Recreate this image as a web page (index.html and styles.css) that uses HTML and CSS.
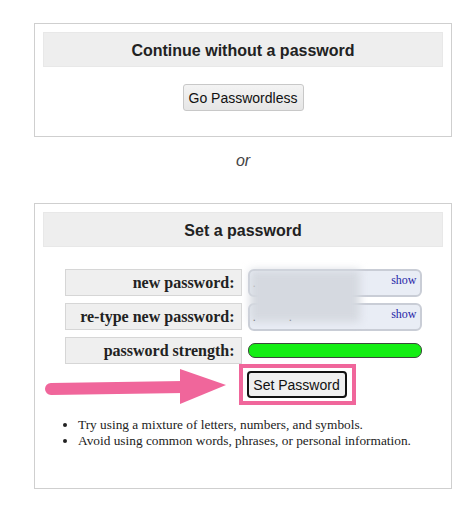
FILE: index.html
```html
<!DOCTYPE html>
<html lang="en">
<head>
    <meta charset="UTF-8">
    <meta name="viewport" content="width=device-width, initial-scale=1.0">
    <title>Account Password</title>
    <link rel="stylesheet" href="styles.css">
</head>
<body>
    <div class="panel">
        <h2 class="panel-title">Continue without a password</h2>
        <div class="passwordless">
            <button class="btn">Go Passwordless</button>
        </div>
    </div>

    <p class="or">or</p>

    <div class="panel panel-set">
        <h2 class="panel-title">Set a password</h2>

        <div class="pw-grid">
            <div class="pw-label">new password:</div>
            <div class="pw-field"><span class="dots">.</span><a class="show" href="#">show</a></div>

            <div class="pw-label">re-type new password:</div>
            <div class="pw-field"><span class="dots">.&nbsp;&nbsp;&nbsp;&nbsp;&nbsp;&nbsp;&nbsp;&nbsp;&nbsp;.</span><a class="show" href="#">show</a></div>

            <div class="pw-label">password strength:</div>
            <div class="strength-cell"><div class="strength"></div></div>

            <div></div>
            <div class="submit-cell">
                <button class="btn btn-focus">Set Password</button>
                <span class="highlight"></span>
            </div>
        </div>

        <ul class="tips">
            <li>Try using a mixture of letters, numbers, and symbols.</li>
            <li>Avoid using common words, phrases, or personal information.</li>
        </ul>

        <!-- redacted password area + annotation arrow -->
        <div class="redact"></div>
        <svg class="arrow" width="190" height="42" viewBox="0 0 190 42">
            <line x1="7" y1="23" x2="140" y2="21" stroke="#f0669b" stroke-width="12" stroke-linecap="round"/>
            <polygon points="136,3 182,19 136,38" fill="#f0669b"/>
        </svg>
    </div>
</body>
</html>
```

FILE: styles.css
```css
body {
    margin: 0;
    padding: 23px 0 0 34px;
    font-family: "Liberation Sans", Arial, sans-serif;
    background: #fff;
    color: #222;
}
.panel {
    position: relative;
    width: 418px;
    box-sizing: border-box;
    border: 1px solid #cfcfcf;
    padding: 8px;
}
.panel-title {
    margin: 0;
    height: 35px;
    line-height: 35px;
    background: #eeeeee;
    border: 1px solid #e8e8e8;
    box-sizing: border-box;
    font-size: 16px;
    font-weight: bold;
    text-align: center;
    color: #222;
}
.passwordless {
    text-align: center;
    margin: 17px 0;
}
.btn {
    font-family: "Liberation Sans", Arial, sans-serif;
    font-size: 14px;
    color: #111;
    background: linear-gradient(#f3f3f3, #e6e6e6);
    border: 1px solid #c8c8c8;
    border-radius: 3px;
    height: 27px;
    padding: 0 5px;
    white-space: nowrap;
}
.passwordless .btn {
    width: 121px;
}
.or {
    margin: 0;
    width: 418px;
    height: 66px;
    box-sizing: border-box;
    padding-top: 15px;
    line-height: 18px;
    text-align: center;
    font-style: italic;
    font-size: 16px;
    color: #444;
}
.pw-grid {
    display: grid;
    grid-template-columns: 177px 175px;
    grid-auto-rows: 27px;
    column-gap: 5px;
    row-gap: 7px;
    justify-content: center;
    margin-top: 22px;
}
.pw-label {
    background: #efefef;
    border: 1px solid #d6d6d6;
    font-family: "Liberation Serif", "Times New Roman", serif;
    font-weight: bold;
    font-size: 16px;
    color: #222;
    text-align: right;
    padding-right: 6px;
    line-height: 25px;
}
.pw-field {
    position: relative;
    margin-left: 1px;
    height: 28px;
    box-sizing: border-box;
    border: 2px solid #c9cdd6;
    border-radius: 6px;
    background: #e9edf5;
}
.dots {
    position: absolute;
    left: 3px;
    top: 4px;
    font-size: 13px;
    color: #222;
}
.show {
    position: absolute;
    right: 3px;
    top: 2px;
    font-family: "Liberation Serif", "Times New Roman", serif;
    font-size: 12px;
    color: #2626a8;
    text-decoration: none;
}
.strength-cell {
    display: flex;
    align-items: center;
    padding-left: 1px;
}
.strength {
    flex: 1;
    height: 15px;
    box-sizing: border-box;
    background: #14ee14;
    border: 1px solid #3b4a3b;
    border-radius: 7px;
}
.submit-cell {
    position: relative;
}
.btn-focus {
    width: 100px;
    padding: 0;
    border: 2px solid #111;
    border-radius: 4px;
    background: #efefef;
}
.highlight {
    position: absolute;
    left: -8px;
    top: -7px;
    width: 117px;
    height: 41px;
    box-sizing: border-box;
    border: 4px solid #f0669b;
}
.tips {
    margin: 19px 0 31px;
    padding-left: 35px;
    font-family: "Liberation Serif", "Times New Roman", serif;
    font-size: 13.33px;
    line-height: 16px;
    color: #222;
}
.redact {
    position: absolute;
    left: 215px;
    top: 66px;
    width: 110px;
    height: 52px;
    background: #d5d9e0;
    filter: blur(4px);
}
.arrow {
    position: absolute;
    left: 9px;
    top: 162px;
}
```
